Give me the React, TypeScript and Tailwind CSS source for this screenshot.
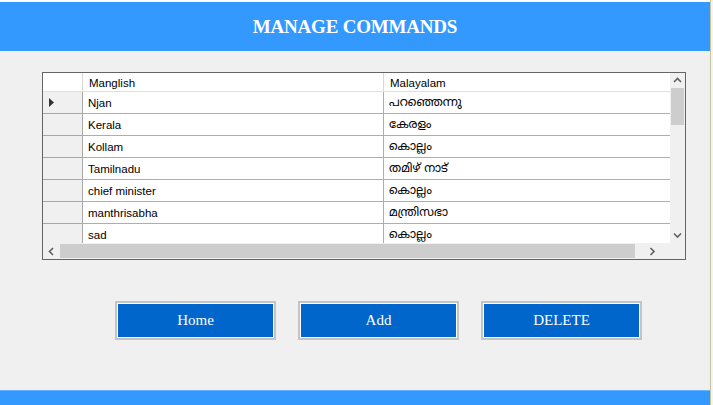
import React from 'react';

type Row = { en: string; ml: string };

const rows: Row[] = [
  { en: 'Njan', ml: 'പറഞ്ഞെന്നു' },
  { en: 'Kerala', ml: 'കേരളം' },
  { en: 'Kollam', ml: 'കൊല്ലം' },
  { en: 'Tamilnadu', ml: 'തമിഴ് നാട്' },
  { en: 'chief minister', ml: 'കൊല്ലം' },
  { en: 'manthrisabha', ml: 'മന്ത്രിസഭാ' },
  { en: 'sad', ml: 'കൊല്ലം' },
];

function Chevron({ dir }: { dir: 'up' | 'down' | 'left' | 'right' }) {
  const d = {
    up: 'M1 5 L4.5 1.5 L8 5',
    down: 'M1 1.5 L4.5 5 L8 1.5',
    left: 'M5 1 L1.5 4.5 L5 8',
    right: 'M1.5 1 L5 4.5 L1.5 8',
  }[dir];
  const vertical = dir === 'up' || dir === 'down';
  return (
    <svg width={vertical ? 9 : 7} height={vertical ? 7 : 9} viewBox={vertical ? '0 0 9 7' : '0 0 7 9'}>
      <path d={d} fill="none" stroke="#606060" strokeWidth="1.6" />
    </svg>
  );
}

function ActionButton({ label }: { label: string }) {
  return (
    <button className="w-[161px] h-[39px] border-2 border-[#c4c4c4] bg-white p-px">
      <span className="flex h-full w-full items-center justify-center bg-[#0066cc] text-white text-[15px] font-['Liberation_Serif',serif]">
        {label}
      </span>
    </button>
  );
}

export default function App() {
  return (
    <div className="flex w-[713px] h-[405px] bg-white overflow-hidden">
      <div className="flex flex-col w-[710px] h-full pt-[2px]">
        {/* Title bar */}
        <div className="h-[49px] bg-[#3399ff] flex items-center justify-center pt-px">
          <h1 className="text-white font-bold text-[19px] tracking-[-0.2px] font-['Liberation_Serif',serif]">
            MANAGE COMMANDS
          </h1>
        </div>

        {/* Body */}
        <div className="flex-1 bg-[#f0f0f0] flex flex-col">
          <div className="ml-[42px] mt-[21px] w-[644px] h-[188px] border border-[#646464] bg-[#f0f0f0] flex flex-col font-['Liberation_Sans',sans-serif] text-[11.5px] text-black">
            <div className="flex h-[170px]">
              {/* grid */}
              <div className="w-[627px] overflow-hidden bg-white">
                <div className="flex h-[19px] bg-white border-b border-[#e0e0e0]">
                  <div className="w-[40px] border-r border-[#d8d8d8]" />
                  <div className="w-[301px] border-r border-[#d8d8d8] pl-[6px] pt-[3px] flex items-center">Manglish</div>
                  <div className="w-[286px] pl-[6px] pt-[3px] flex items-center">Malayalam</div>
                </div>
                {rows.map((r, i) => (
                  <div key={i} className="flex h-[22px]">
                    <div className="w-[40px] bg-[#f0f0f0] border-r border-b border-[#a8a8a8] flex items-center pl-[6px]">
                      {i === 0 && (
                        <svg width="6" height="9" viewBox="0 0 6 9">
                          <path d="M0 0 L5 4.5 L0 9 Z" fill="#333" />
                        </svg>
                      )}
                    </div>
                    <div className="w-[301px] border-r border-b border-[#7db9f2] pl-[5px] pt-[2px] flex items-center">{r.en}</div>
                    <div className="w-[286px] border-b border-[#7db9f2] pl-[5px] pt-[2px] flex items-center font-['Noto_Sans_Malayalam','Noto_Sans',sans-serif] text-[12px]">
                      {r.ml}
                    </div>
                  </div>
                ))}
              </div>
              {/* vertical scrollbar */}
              <div className="w-[15px] bg-[#f0f0f0] flex flex-col">
                <div className="h-[15px] flex items-center justify-center">
                  <Chevron dir="up" />
                </div>
                <div className="h-[37px] mx-[1px] bg-[#cdcdcd]" />
                <div className="flex-1" />
                <div className="h-[15px] flex items-center justify-center">
                  <Chevron dir="down" />
                </div>
              </div>
            </div>
            {/* horizontal scrollbar */}
            <div className="flex h-[16px]">
              <div className="w-[627px] flex bg-[#f0f0f0]">
                <div className="w-[17px] flex items-center justify-center">
                  <Chevron dir="left" />
                </div>
                <div className="w-[575px] my-[1px] bg-[#cdcdcd]" />
                <div className="flex-1 flex items-center justify-center">
                  <Chevron dir="right" />
                </div>
              </div>
              <div className="w-[15px] bg-[#f0f0f0]" />
            </div>
          </div>

          {/* Buttons */}
          <div className="mt-[41px] ml-[115px] flex gap-[22px]">
            <ActionButton label="Home" />
            <ActionButton label="Add" />
            <ActionButton label="DELETE" />
          </div>
        </div>

        {/* Bottom bar */}
        <div className="h-[15px] bg-[#3399ff] border-t border-[#66b3ff]" />
      </div>
      <div className="w-px h-full bg-[#c8c39a]" />
      <div className="flex-1 bg-[#f4f4f0]" />
    </div>
  );
}
